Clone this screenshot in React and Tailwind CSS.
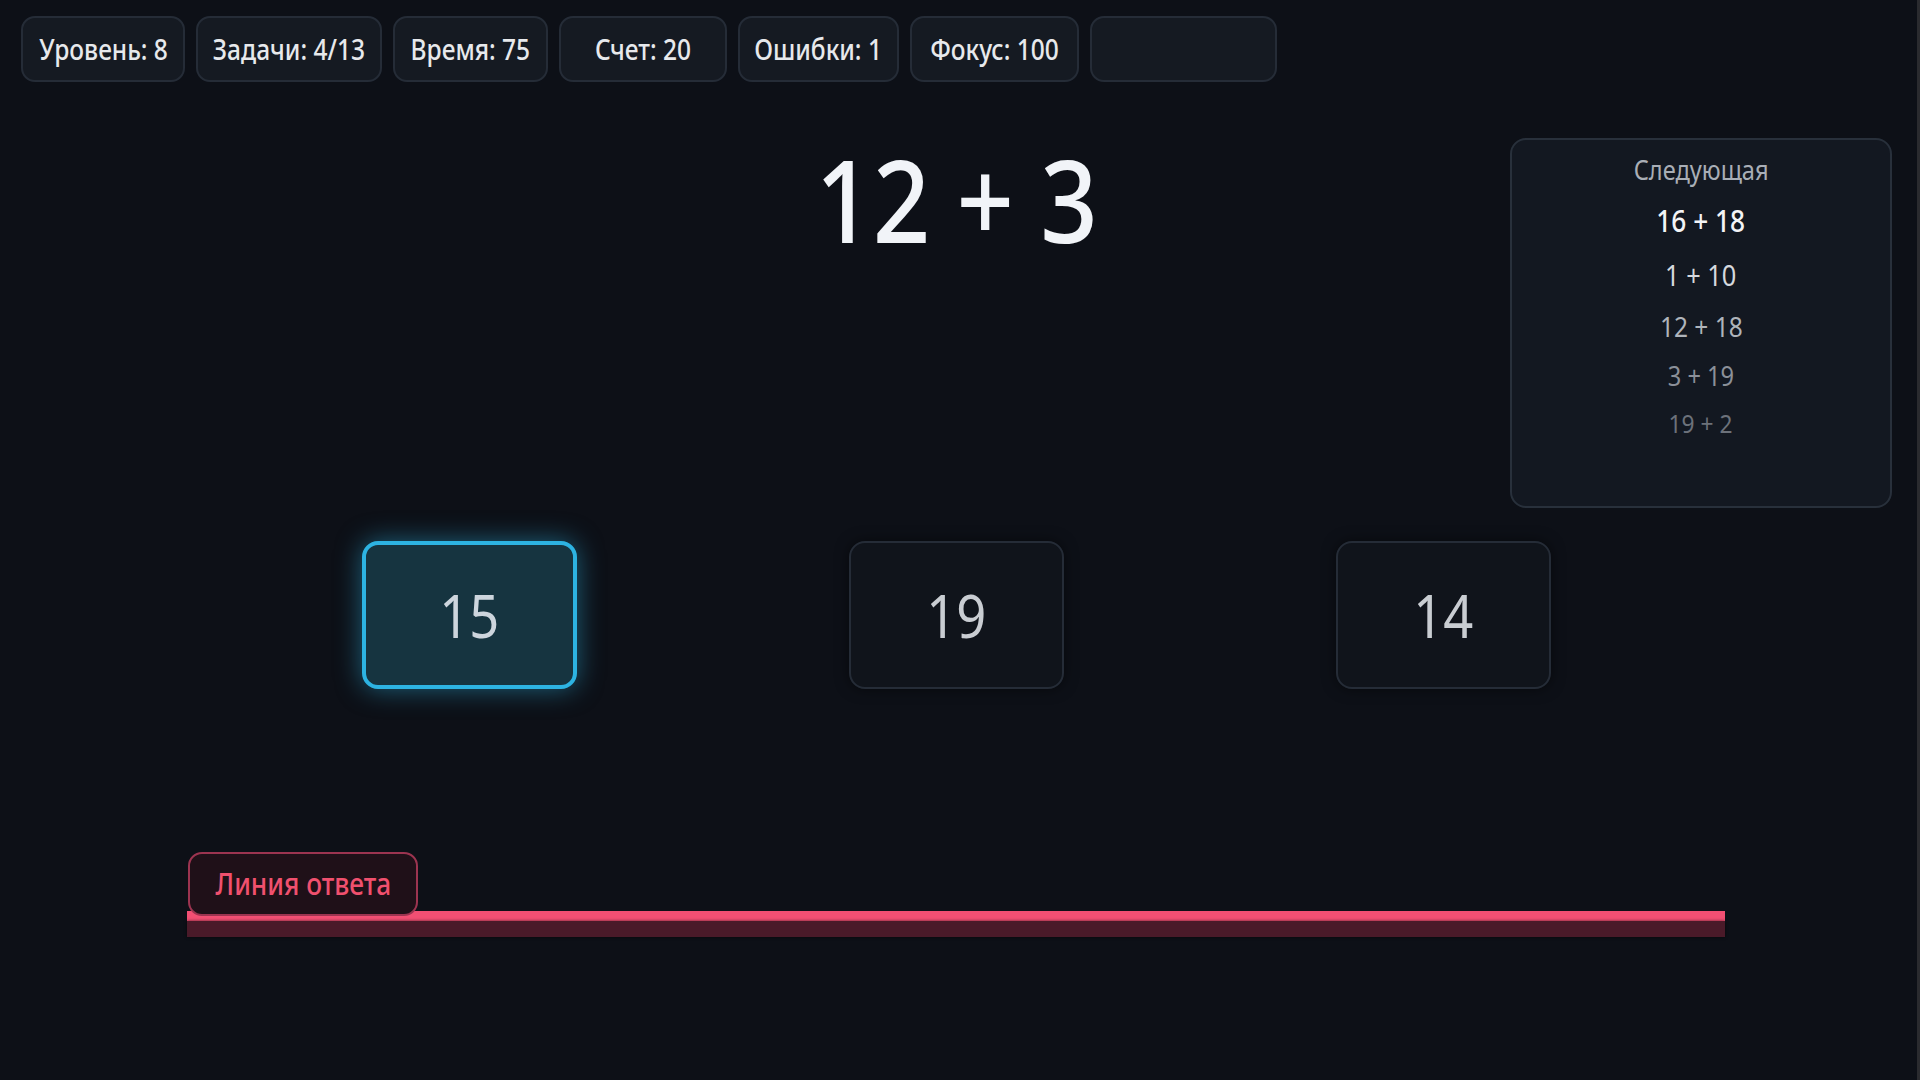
import { useState } from 'react'

const stats = [
  { label: 'Уровень: 8', w: 'w-[164px]' },
  { label: 'Задачи: 4/13', w: 'w-[186px]' },
  { label: 'Время: 75', w: 'w-[155px]' },
  { label: 'Счет: 20', w: 'w-[168px]' },
  { label: 'Ошибки: 1', w: 'w-[161px]' },
  { label: 'Фокус: 100', w: 'w-[169px]' },
]

const queue = [
  { text: '16 + 18', cls: 'text-[30px] font-medium text-[#f3f4f6] mt-[23px]' },
  { text: '1 + 10', cls: 'text-[29px] text-[#d5d8dd] mt-[24px]' },
  { text: '12 + 18', cls: 'text-[28px] text-[#afb4bb] mt-[23px]' },
  { text: '3 + 19', cls: 'text-[27px] text-[#8b9099] mt-[22px]' },
  { text: '19 + 2', cls: 'text-[26px] text-[#6c717a] mt-[21px]' },
]

const answers = [15, 19, 14]

// text in this UI is a touch narrower than the stock face
function Narrow({ children }) {
  return <span className="inline-block scale-x-[0.875] whitespace-nowrap">{children}</span>
}

export default function App() {
  const [selected, setSelected] = useState(0)

  return (
    <div className="flex min-h-screen w-full bg-[#0d1017] font-['Noto_Sans','Open_Sans',sans-serif]">
      <div className="relative w-[1912px] shrink-0">
        {/* stats row */}
        <div className="flex gap-[11px] pl-[21px] pt-[16px]">
          {stats.map((s) => (
            <div
              key={s.label}
              className={
                'flex h-[66px] items-center justify-center rounded-[14px] border-2 border-[#252c37] bg-[#151a22] text-[28px] font-medium text-[#e7e9ec] ' +
                s.w
              }
            >
              <Narrow>{s.label}</Narrow>
            </div>
          ))}
          <div className="h-[66px] w-[187px] rounded-[14px] border-2 border-[#252c37] bg-[#151a22]" />
        </div>

        {/* current task */}
        <div className="mt-[59px] text-center text-[115px] font-medium leading-none text-[#f1f4f8]">
          <Narrow>12 + 3</Narrow>
        </div>

        {/* next tasks */}
        <div className="absolute right-[20px] top-[138px] flex h-[370px] w-[382px] flex-col items-center rounded-[16px] border-2 border-[#28303b] bg-[#131821] pt-[16px]">
          <div className="text-[27px] leading-none text-[#a9aeb6]">
            <Narrow>Следующая</Narrow>
          </div>
          {queue.map((q) => (
            <div key={q.text} className={'leading-none ' + q.cls}>
              <Narrow>{q.text}</Narrow>
            </div>
          ))}
        </div>

        {/* answers */}
        <div className="mt-[285px] flex justify-center gap-[272px]">
          {answers.map((a, i) => (
            <button
              key={a}
              onClick={() => setSelected(i)}
              className={
                i === selected
                  ? 'flex h-[148px] w-[215px] items-center justify-center rounded-[16px] border-[4px] border-[#2db3e2] bg-[#163440] text-[60px] leading-none text-[#cdd5dd] shadow-[0_0_26px_rgba(45,179,226,0.5)]'
                  : 'flex h-[148px] w-[215px] items-center justify-center rounded-[16px] border-2 border-[#252c37] bg-[#10141b] text-[60px] leading-none text-[#c9cdd2] shadow-[0_0_14px_rgba(0,0,0,0.5)]'
              }
            >
              <Narrow>{a}</Narrow>
            </button>
          ))}
        </div>

        {/* answer line */}
        <div className="mx-auto mt-[163px] w-[1538px]">
          <div className="relative z-10 ml-px flex h-[64px] w-[230px] items-center justify-center rounded-[14px] border-2 border-[#9c3450] bg-[#1f1018] text-[30px] font-medium leading-none text-[#f0506e]">
            <Narrow>Линия ответа</Narrow>
          </div>
          <div className="-mt-[5px] h-[10px] bg-[#f24f73]" />
          <div className="h-[16px] bg-[#4a1a29] shadow-[0_0_3px_rgba(0,0,0,0.6)]" />
        </div>
      </div>
      <div className="flex-1" />
      <div className="w-[3px] bg-[#2a2b2f]" />
    </div>
  )
}
